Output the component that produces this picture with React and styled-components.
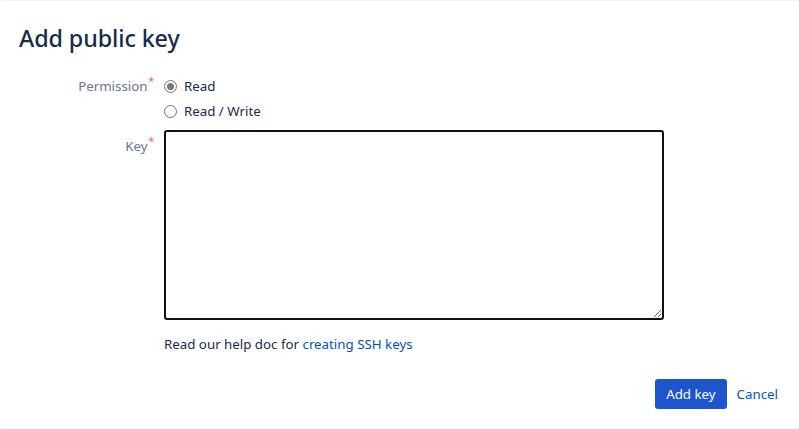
import React, { useState } from "react";
import styled, { createGlobalStyle } from "styled-components";

const Global = createGlobalStyle`
  html, body {
    margin: 0;
    padding: 0;
    background: #f4f5f7;
  }
  body {
    font-family: "Noto Sans", "Liberation Sans", sans-serif;
    color: #172b4d;
  }
`;

const App = () => {
  const [perm, setPerm] = useState("read");

  return (
    <>
      <Global />
      <Page>
        <Modal>
          <Title>Add public key</Title>
          <Form>
            <Label>
              Permission<Req>*</Req>
            </Label>
            <Radios>
              <RadioRow>
                <Radio
                  type='radio'
                  name='perm'
                  checked={perm === "read"}
                  onChange={() => setPerm("read")}
                />
                Read
              </RadioRow>
              <RadioRow>
                <Radio
                  type='radio'
                  name='perm'
                  checked={perm === "write"}
                  onChange={() => setPerm("write")}
                />
                Read / Write
              </RadioRow>
            </Radios>
            <Label $top>
              Key<Req>*</Req>
            </Label>
            <KeyArea />
            <span />
            <Help>
              Read our help doc for <a href='#'>creating SSH keys</a>
            </Help>
          </Form>
          <Footer>
            <Primary>Add key</Primary>
            <LinkButton>Cancel</LinkButton>
          </Footer>
        </Modal>
      </Page>
    </>
  );
};

export default App;

const Page = styled.div`
  padding-top: 1px;
  height: 428px;
`;

const Modal = styled.div`
  background: #fff;
  border-radius: 3px;
  height: 427px;
  box-sizing: border-box;
  padding: 22px 21px 0 19px;
`;

const Title = styled.h2`
  margin: 0;
  font-size: 23.3px;
  font-weight: 500;
  line-height: 30px;
  color: #172b4d;
  letter-spacing: -0.1px;
`;

const Form = styled.div`
  display: grid;
  grid-template-columns: 135px 500px;
  column-gap: 10px;
  row-gap: 9px;
  margin-top: 23px;
`;

const Label = styled.div`
  text-align: right;
  font-size: 13.3px;
  line-height: 20px;
  color: #6b778c;
  padding-top: ${(p) => (p.$top ? "6px" : "0")};
`;

const Req = styled.sup`
  color: #e5685a;
  font-size: 10px;
  margin-left: 1px;
  vertical-align: 6px;
  line-height: 0;
`;

const Radios = styled.div`
  display: flex;
  flex-direction: column;
  gap: 5px;
`;

const RadioRow = styled.label`
  display: flex;
  align-items: center;
  gap: 7px;
  font-size: 13.3px;
  line-height: 20px;
  color: #172b4d;
`;

const Radio = styled.input`
  appearance: none;
  margin: 0;
  width: 13px;
  height: 13px;
  border-radius: 50%;
  border: 1px solid #767676;
  box-sizing: border-box;
  background: #fff;
  position: relative;

  &:checked::after {
    content: "";
    position: absolute;
    inset: 2px;
    border-radius: 50%;
    background: #767676;
  }
`;

const KeyArea = styled.textarea`
  width: 500px;
  height: 190px;
  box-sizing: border-box;
  border: 2px solid #111;
  border-radius: 3px;
  resize: vertical;
  outline: none;
  font-family: inherit;
`;

const Help = styled.div`
  font-size: 13.3px;
  line-height: 20px;
  color: #172b4d;
  margin-top: 5px;

  a {
    color: #0052cc;
    text-decoration: none;
  }
`;

const Footer = styled.div`
  display: flex;
  justify-content: flex-end;
  align-items: center;
  gap: 10px;
  margin-top: 25px;
`;

const Primary = styled.button`
  background: #1d56cc;
  color: #fff;
  border: none;
  border-radius: 3px;
  height: 30px;
  padding: 0 11px;
  font-family: inherit;
  font-size: 13.3px;
`;

const LinkButton = styled.button`
  background: none;
  border: none;
  padding: 0;
  color: #0052cc;
  font-family: inherit;
  font-size: 13.3px;
`;
